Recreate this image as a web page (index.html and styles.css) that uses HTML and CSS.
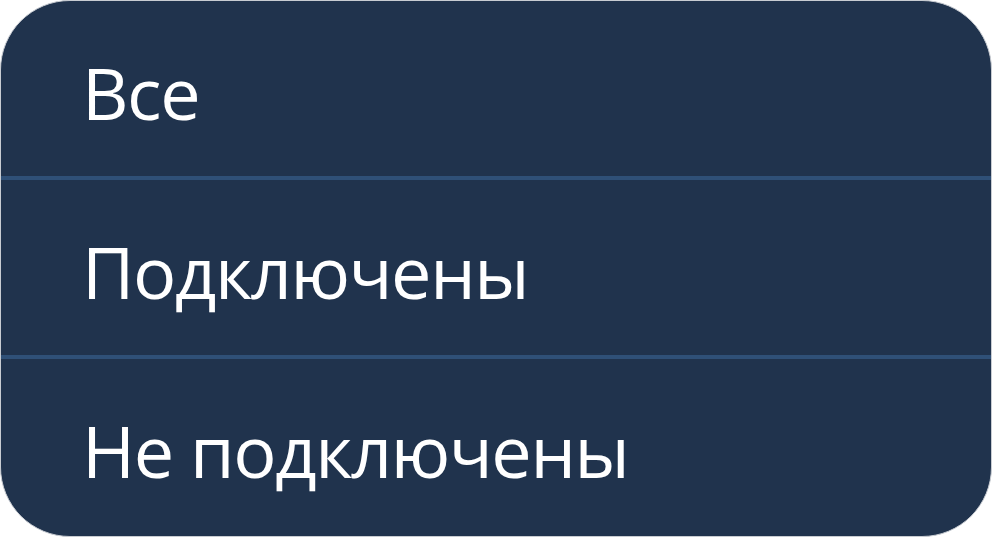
FILE: index.html
```html
<!DOCTYPE html>
<html lang="ru">
<head>
<meta charset="utf-8">
<link rel="stylesheet" href="styles.css">
</head>
<body>
<div class="menu">
  <div class="item">Все</div>
  <div class="divider"></div>
  <div class="item">Подключены</div>
  <div class="divider"></div>
  <div class="item">Не подключены</div>
</div>
</body>
</html>
```
FILE: styles.css
```css
html, body {
  margin: 0;
  padding: 0;
  background: #ffffff;
}
body {
  width: 992px;
  height: 537px;
  overflow: hidden;
}
.menu {
  box-sizing: border-box;
  width: 992px;
  height: 537px;
  background: #20334d;
  border: 1px solid #c8ccd2;
  border-radius: 70px;
  overflow: hidden;
  display: flex;
  flex-direction: column;
  font-family: "Open Sans", "Noto Sans", sans-serif;
  color: #ffffff;
}
.item {
  box-sizing: border-box;
  height: 175px;
  flex: none;
  padding: 42px 0 0 81px;
  font-size: 72px;
  line-height: 98px;
  letter-spacing: -1.4px;
  white-space: nowrap;
}
.item:last-child {
  flex: 1;
}
.divider {
  height: 4px;
  flex: none;
  background: #2f5077;
}
```
